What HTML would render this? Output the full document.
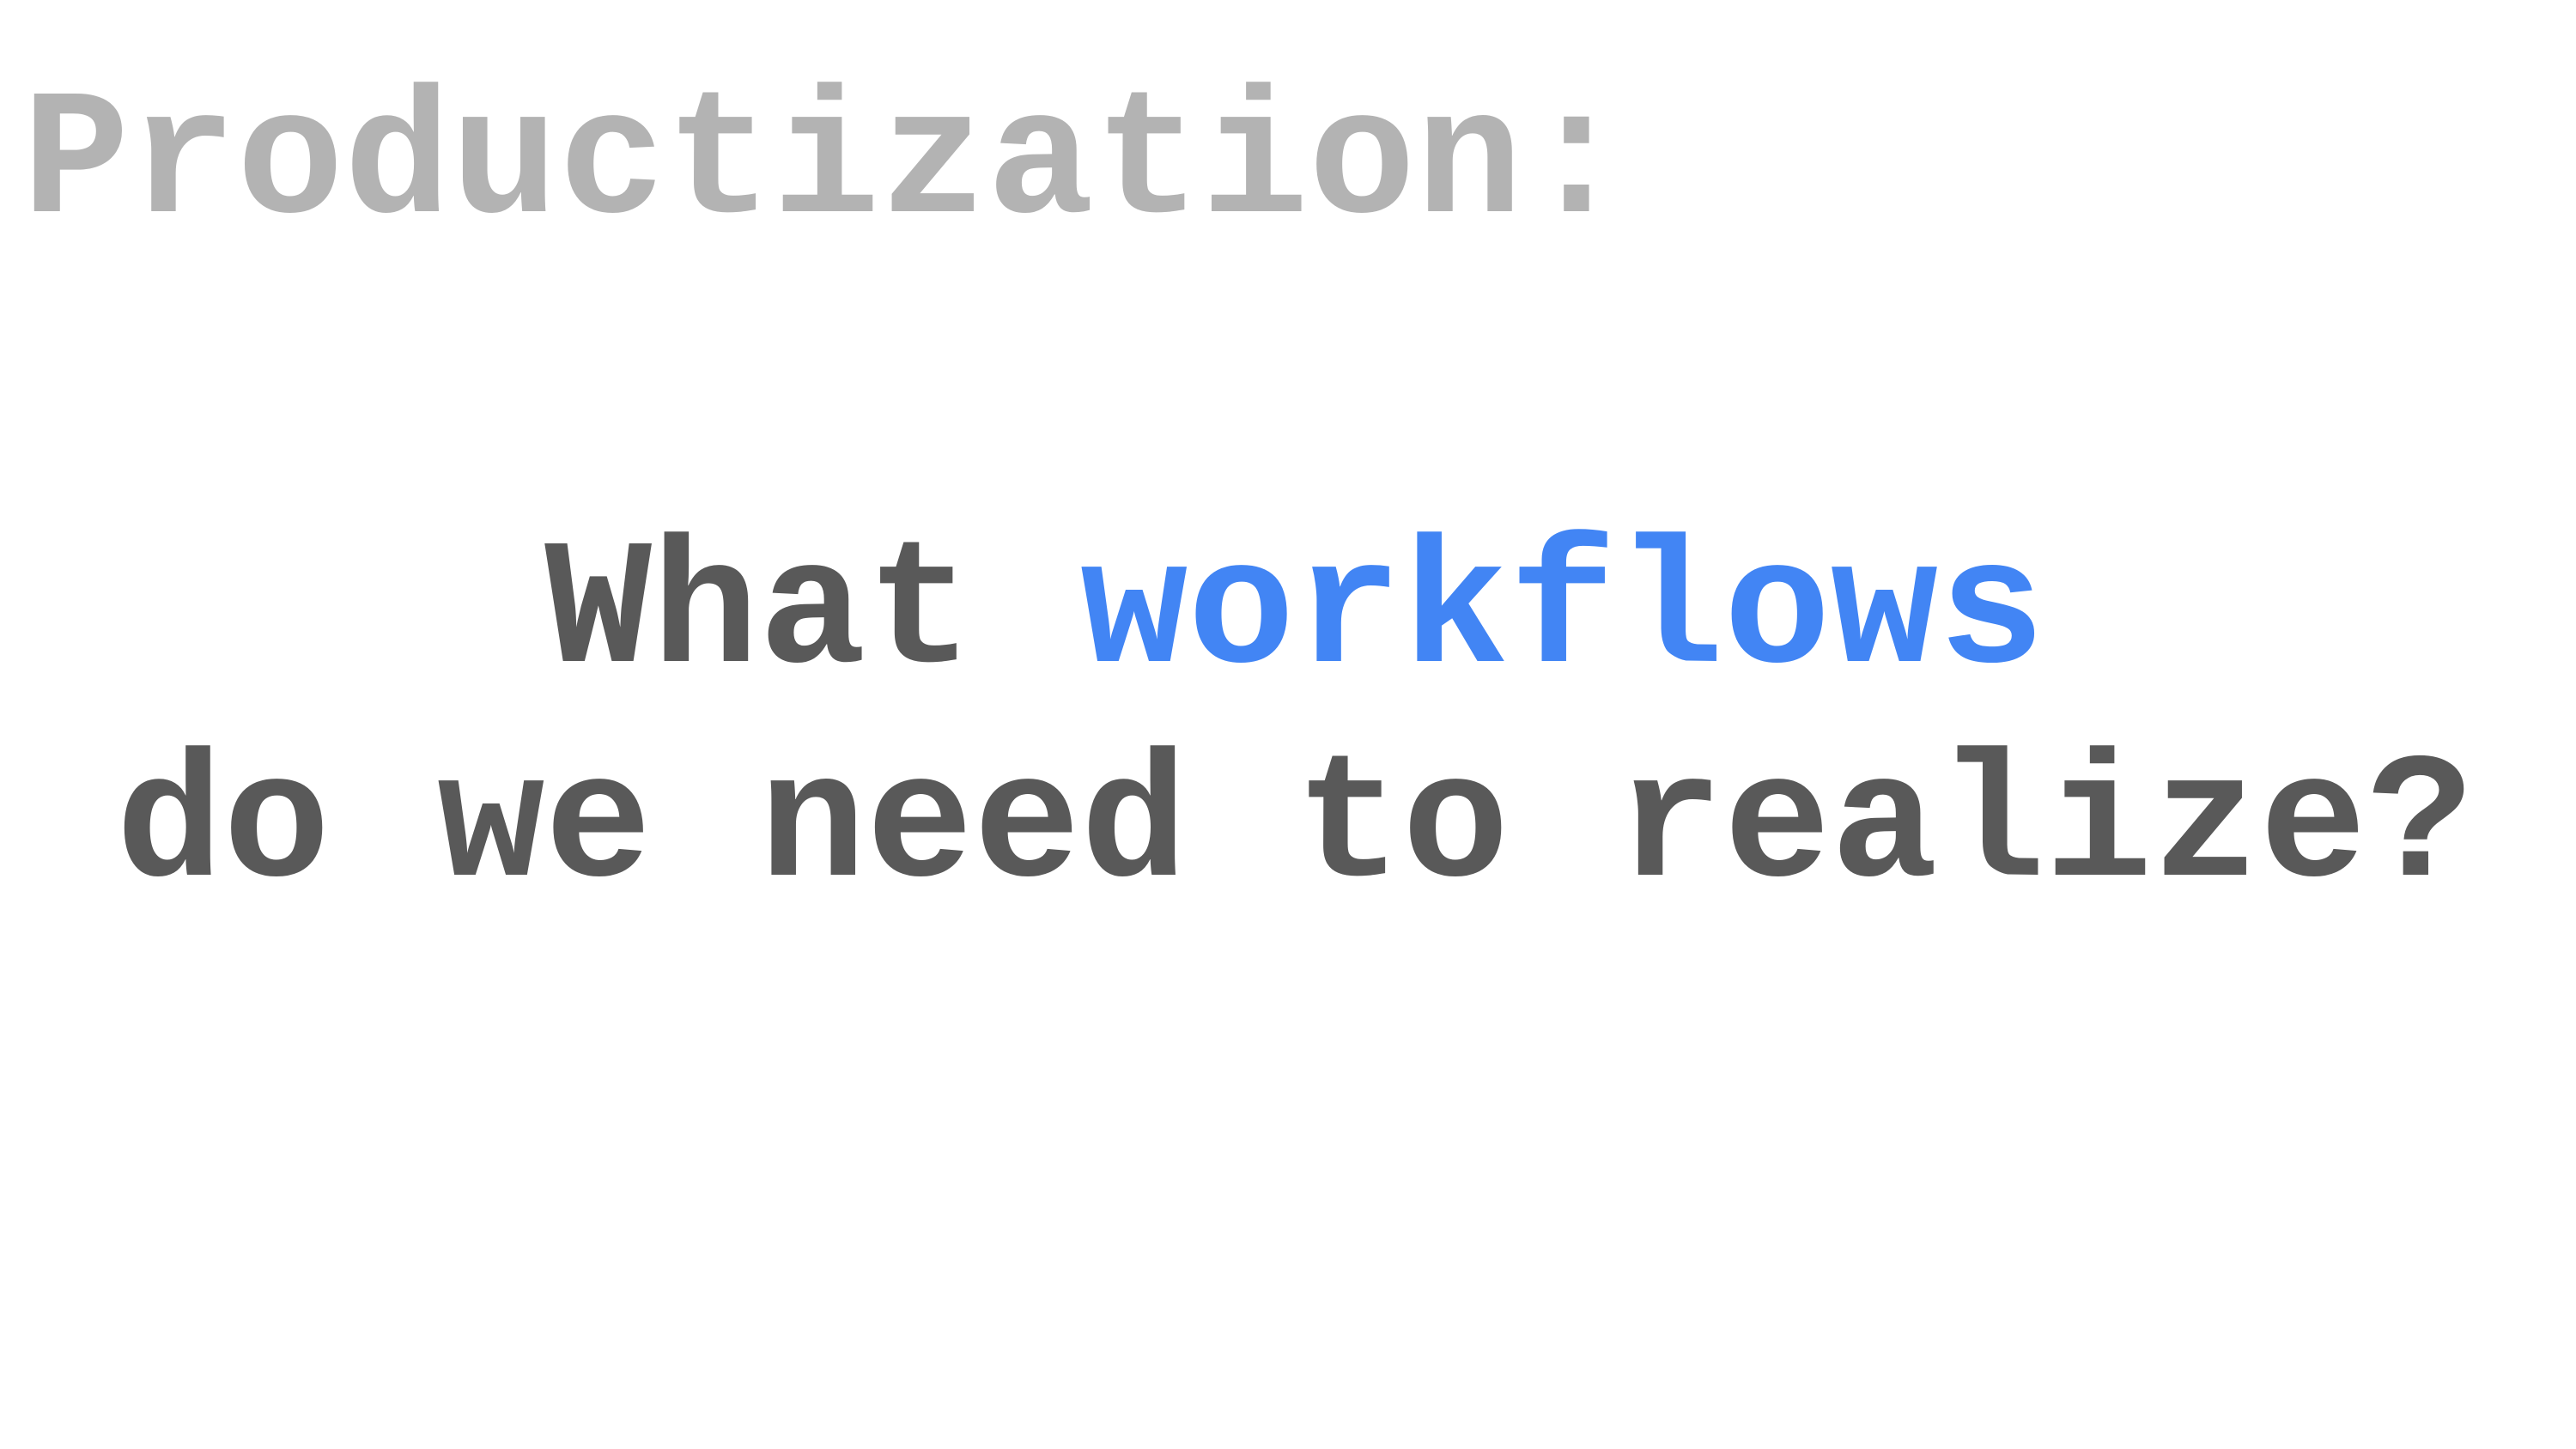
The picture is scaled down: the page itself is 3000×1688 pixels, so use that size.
<!DOCTYPE html>
<html><head><meta charset="utf-8"><style>
html,body{margin:0;padding:0;background:#fff;}
body{width:3000px;height:1688px;position:relative;overflow:hidden;font-family:"Liberation Mono","Courier New",monospace;font-weight:bold;}
.t{position:absolute;white-space:pre;font-size:208px;line-height:208px;}
#title{left:26px;top:88px;color:#b3b3b3;}
#l1{left:0;width:3000px;text-align:center;top:612px;color:#595959;padding-left:16px;box-sizing:border-box;}
#l2{left:0;width:3000px;text-align:center;top:861px;color:#595959;padding-left:16px;box-sizing:border-box;}
.b{color:#4285f4;}
</style></head><body>
<div class="t" id="title">Productization:</div>
<div class="t" id="l1">What <span class="b">workflows</span></div>
<div class="t" id="l2">do we need to realize?</div>
</body></html>
